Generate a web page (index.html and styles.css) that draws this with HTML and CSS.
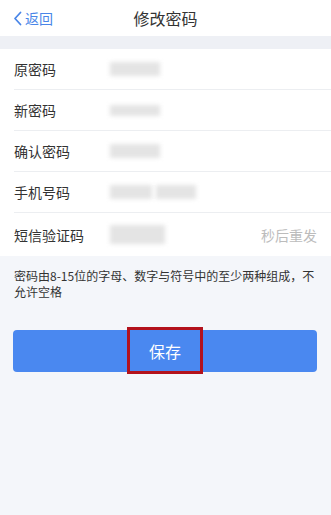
FILE: index.html
```html
<!DOCTYPE html>
<html lang="zh">
<head>
<meta charset="utf-8">
<link rel="stylesheet" href="styles.css">
</head>
<body>
<header class="nav">
  <a class="back">
    <svg class="chev" width="9" height="15" viewBox="0 0 9 15"><path d="M7.5 1.5 L2 7.5 L7.5 13.5" fill="none" stroke="#4a86e8" stroke-width="1.8" stroke-linecap="round" stroke-linejoin="round"/></svg>
    <span>返回</span>
  </a>
  <h1 class="title">修改密码</h1>
</header>
<div class="band"></div>
<section class="form">
  <div class="row"><span class="label">原密码</span><span class="val"><i class="blk w50"></i></span></div>
  <div class="row"><span class="label">新密码</span><span class="val"><i class="blk w50 thin"></i></span></div>
  <div class="row"><span class="label">确认密码</span><span class="val"><i class="blk w50"></i></span></div>
  <div class="row"><span class="label">手机号码</span><span class="val"><i class="blk w40"></i><i class="blk w36"></i></span></div>
  <div class="row last"><span class="label">短信验证码</span><span class="val"><i class="blk w55 tall"></i></span><span class="resend">秒后重发</span></div>
</section>
<p class="hint">密码由8-15位的字母、数字与符号中的至少两种组成，不<br>允许空格</p>
<div class="actions">
  <button class="save"><span class="txt">保存</span><span class="mark"></span></button>
</div>
</body>
</html>
```
FILE: styles.css
```css
* { box-sizing: border-box; }
html, body { margin: 0; padding: 0; }
body {
  width: 331px;
  height: 515px;
  background: #f4f6fa;
  font-family: "Noto Sans CJK SC", "Noto Sans", sans-serif;
  color: #333;
  overflow: hidden;
}
.nav {
  height: 36px;
  background: #fff;
  display: flex;
  align-items: center;
  justify-content: center;
  position: relative;
}
.back {
  position: absolute;
  left: 13px;
  top: 0;
  height: 36px;
  display: flex;
  align-items: center;
  gap: 3px;
  color: #4a86e8;
  font-size: 14px;
}
.title {
  margin: 0;
  font-size: 16px;
  font-weight: 400;
  color: #333;
}
.band {
  height: 13px;
  background: #eef0f5;
}
.form {
  background: #fff;
  padding-left: 14px;
}
.row {
  height: 41px;
  display: flex;
  align-items: center;
  border-bottom: 1px solid #eceef1;
}
.row.last { border-bottom: none; height: 43px; }
.label {
  width: 96px;
  font-size: 14px;
  color: #333;
}
.val {
  flex: 1;
  display: flex;
  gap: 4px;
  align-items: center;
}
.blk {
  display: block;
  height: 14px;
  background: #e4e4e4;
  filter: blur(2px);
}
.blk.thin { height: 11px; }
.blk.tall { height: 19px; }
.w50 { width: 50px; }
.w40 { width: 42px; }
.w36 { width: 40px; }
.w55 { width: 55px; }
.resend {
  margin-right: 14px;
  font-size: 14px;
  color: #bcbcbc;
}
.hint {
  margin: 12px 0 0 14px;
  font-size: 12px;
  line-height: 16px;
  white-space: nowrap;
  color: #333;
}
.actions {
  padding: 30px 14px 0 13px;
}
.save {
  position: relative;
  width: 100%;
  height: 42px;
  border: none;
  border-radius: 4px;
  background: #4a88f0;
  color: #fff;
  font-family: inherit;
  font-size: 16px;
  display: flex;
  align-items: center;
  justify-content: center;
}
.mark {
  position: absolute;
  left: 50%;
  top: -3px;
  width: 76px;
  height: 47px;
  margin-left: -38px;
  border: 3px solid #b3121c;
}
```
